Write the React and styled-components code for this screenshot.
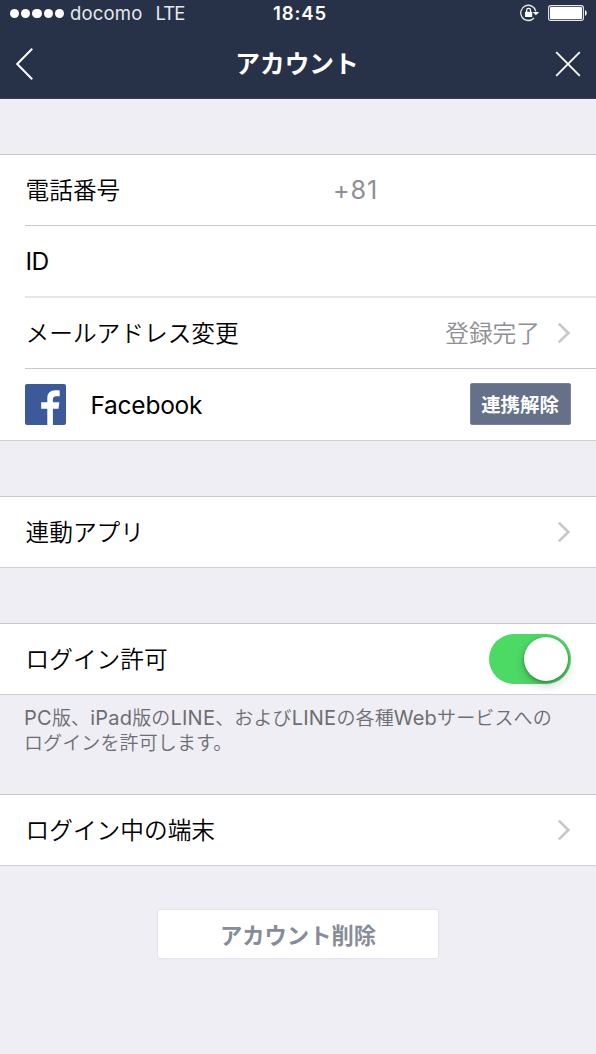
import React from "react";
import styled, { createGlobalStyle, css } from "styled-components";

const GlobalStyle = createGlobalStyle`
  * {
    box-sizing: border-box;
    margin: 0;
    padding: 0;
  }
  body {
    background-color: #efeef4;
    font-family: "Inter", "Noto Sans CJK JP", sans-serif;
    color: #000;
    overflow: hidden;
  }
  svg {
    display: block;
    flex-shrink: 0;
  }
`;

const SScreen = styled.div`
  width: 596px;
  height: 1054px;
  background-color: #efeef4;
`;

const SHeader = styled.header`
  height: 99px;
  background-color: #273148;
  border-bottom: 1px solid #3d4055;
  color: #fff;
`;

const SStatusBar = styled.div`
  display: grid;
  grid-template-columns: 1fr auto 1fr;
  align-items: center;
  height: 27px;
  padding: 0 9px 0 10px;
`;

const SCarrier = styled.div`
  display: flex;
  align-items: center;
  font-size: 18.5px;
  line-height: 26px;
  color: #e6e8ec;
`;

const SSignal = styled.div`
  display: flex;
  gap: 2px;
  margin-right: 6px;
`;

const SDot = styled.i`
  width: 9.2px;
  height: 9.2px;
  border-radius: 50%;
  background-color: #fff;
`;

const SCarrierName = styled.span`
  margin-top: -1px;
  letter-spacing: 0.2px;
  margin-right: 13px;
`;

const SNetwork = styled.span`
  margin-top: -1px;
  letter-spacing: -0.9px;
`;

const STime = styled.span`
  margin-top: -1px;
  padding-left: 3px;
  font-size: 18.5px;
  font-weight: 600;
  line-height: 26px;
  letter-spacing: 0.9px;
`;

const SIndicators = styled.div`
  display: flex;
  align-items: center;
  justify-content: flex-end;
  gap: 8px;
  margin: -1px -1px 0 0;
`;

const SNavBar = styled.div`
  display: grid;
  grid-template-columns: 60px 1fr 60px;
  align-items: center;
  height: 71px;
  padding: 2px 15px 0;
`;

const SNavButton = styled.button`
  display: flex;
  justify-content: ${(props) => (props.$right ? "flex-end" : "flex-start")};
  border: none;
  background: transparent;
  color: #fff;
`;

const STitle = styled.h1`
  font-size: 24.7px;
  font-weight: 600;
  line-height: 36px;
  text-align: center;
  padding-right: 2px;
`;

const SSection = styled.section`
  margin-top: ${(props) => props.$top}px;
  background-color: #fff;
  border-top: 1px solid #c9c8cd;
  border-bottom: 1px solid #cfced3;
`;

const SRow = styled.div`
  display: flex;
  align-items: center;
  height: ${(props) => props.$height || 70}px;
  margin-left: 25px;
  padding-right: 25px;
  ${(props) =>
    props.$line &&
    css`
      border-bottom: 1px solid #c8c7cc;
    `}
  ${(props) =>
    props.$softLine &&
    css`
      border-bottom: 2px solid #e6e6e8;
    `}
`;

const SLabel = styled.span`
  flex: 1;
  padding: 1px 0 0 0.5px;
  font-size: 23.7px;
  font-weight: 350;
  line-height: 34px;
  ${(props) =>
    props.$latin &&
    css`
      padding-top: 0;
      font-size: 24.5px;
      font-weight: 400;
      letter-spacing: ${props.$spacing || 0}px;
    `}
`;

const SValue = styled.span`
  font-size: 23.7px;
  font-weight: 350;
  line-height: 34px;
  padding-top: 1px;
  color: #8e8e93;
  margin-right: 17px;
`;

const SPhone = styled.span`
  width: 238px;
  font-size: 25.2px;
  line-height: 34px;
  letter-spacing: 0.9px;
  color: #8e8e93;
`;

const SFacebook = styled.svg`
  margin-right: 24px;
`;

const SUnlinkButton = styled.button`
  width: 101px;
  height: 42px;
  margin-top: -1px;
  padding: 1px 1px 0 0;
  border: 1px solid #7a8398;
  border-radius: 2px;
  background-color: #657089;
  color: #fff;
  font-family: inherit;
  font-size: 19.4px;
  font-weight: 700;
  line-height: 28px;
`;

const SSwitch = styled.button`
  display: flex;
  justify-content: flex-end;
  width: 82px;
  height: 50px;
  padding: 3px;
  border: none;
  border-radius: 25px;
  background-color: #4cd964;
`;

const SKnob = styled.span`
  width: 44px;
  height: 44px;
  border-radius: 50%;
  background-color: #fff;
  box-shadow: 0 4px 10px rgba(0, 0, 0, 0.22), 0 1px 3px rgba(0, 0, 0, 0.3);
`;

const SNote = styled.p`
  height: 99px;
  padding: 11px 24px 0;
  font-size: 19px;
  font-weight: 350;
  line-height: 25px;
  letter-spacing: 0.12px;
  color: #6d6d72;
  white-space: nowrap;
`;

const SNoteLatin = styled.span`
  font-size: 20px;
  font-weight: 400;
  line-height: 1;
  letter-spacing: 0.24px;
`;

const SDeleteButton = styled.button`
  display: block;
  width: 282px;
  height: 50px;
  margin: 43px auto 0;
  padding-top: 3px;
  border: 1px solid #e4e3ea;
  border-radius: 3px;
  background-color: #fff;
  color: #868d98;
  font-family: inherit;
  font-size: 22.3px;
  font-weight: 600;
  line-height: 32px;
`;

const Chevron = () => (
  <svg width="14" height="22" viewBox="0 0 14 22" fill="none">
    <path d="M1.8 1.6L11.3 11L1.8 20.4" stroke="#c7c7cc" strokeWidth="2.7" />
  </svg>
);

const RotationLock = () => (
  <svg width="20" height="18" viewBox="0 0 20 18" fill="none">
    <path d="M15.8 7.4A7.6 7.6 0 1 0 14 14" stroke="#e6e8ec" strokeWidth="1.3" />
    <path d="M12.6 8H19.2L15.9 11.2Z" fill="#fff" />
    <rect x="5" y="7.8" width="7.2" height="5.2" fill="#fff" />
    <path d="M6.7 8V6.3A1.9 1.9 0 0 1 10.5 6.3V8" stroke="#fff" strokeWidth="1.2" />
  </svg>
);

const Battery = () => (
  <svg width="40" height="16" viewBox="0 0 40 16" fill="none">
    <rect x="0.6" y="0.6" width="34.8" height="14.8" rx="2.2" stroke="#e6e8ec" strokeWidth="1.1" />
    <rect x="2" y="2" width="32" height="12" rx="0.8" fill="#fff" />
    <path d="M37 5.2C39.3 5.6 39.3 10.4 37 10.8Z" fill="#fff" />
  </svg>
);

const FacebookLogo = () => (
  <SFacebook width="41" height="41" viewBox="0 0 41 41">
    <rect width="41" height="41" rx="2" fill="#3c5a99" />
    <path
      d="M22.3 41V24.7H16.2V18.3H22.3V14.2C22.3 9 25.5 6.2 30.3 6.2C32.3 6.2 34 6.3 34.7 6.4V12.3H31.5C28.6 12.3 27.9 13.6 27.9 15.6V18.3H34.4L33.5 24.7H27.9V41Z"
      fill="#fff"
    />
  </SFacebook>
);

const App = () => {
  return (
    <SScreen>
      <GlobalStyle />
      <SHeader>
        <SStatusBar>
          <SCarrier>
            <SSignal>
              {[0, 1, 2, 3, 4].map((dot) => (
                <SDot key={dot} />
              ))}
            </SSignal>
            <SCarrierName>docomo</SCarrierName>
            <SNetwork>LTE</SNetwork>
          </SCarrier>
          <STime>18:45</STime>
          <SIndicators>
            <RotationLock />
            <Battery />
          </SIndicators>
        </SStatusBar>
        <SNavBar>
          <SNavButton aria-label="back">
            <svg width="20" height="32" viewBox="0 0 20 32" fill="none">
              <path d="M17.2 0.8L2.2 16L17.2 31.2" stroke="currentColor" strokeWidth="2" />
            </svg>
          </SNavButton>
          <STitle>アカウント</STitle>
          <SNavButton $right aria-label="close">
            <svg width="26" height="26" viewBox="0 0 26 26" fill="none">
              <path d="M1.2 1.2L24.8 24.8M24.8 1.2L1.2 24.8" stroke="currentColor" strokeWidth="1.8" />
            </svg>
          </SNavButton>
        </SNavBar>
      </SHeader>

      <SSection $top={55}>
        <SRow $height={71} $line>
          <SLabel>電話番号</SLabel>
          <SPhone>+81</SPhone>
        </SRow>
        <SRow $height={72} $softLine>
          <SLabel $latin $spacing={-0.6}>
            ID
          </SLabel>
        </SRow>
        <SRow $height={71} $line>
          <SLabel>メールアドレス変更</SLabel>
          <SValue>登録完了</SValue>
          <Chevron />
        </SRow>
        <SRow $height={71}>
          <FacebookLogo />
          <SLabel $latin $spacing={-0.25}>
            Facebook
          </SLabel>
          <SUnlinkButton>連携解除</SUnlinkButton>
        </SRow>
      </SSection>

      <SSection $top={55}>
        <SRow>
          <SLabel>連動アプリ</SLabel>
          <Chevron />
        </SRow>
      </SSection>

      <SSection $top={55}>
        <SRow>
          <SLabel>ログイン許可</SLabel>
          <SSwitch role="switch" aria-checked="true">
            <SKnob />
          </SSwitch>
        </SRow>
      </SSection>
      <SNote>
        <SNoteLatin>PC</SNoteLatin>版、<SNoteLatin>iPad</SNoteLatin>版の<SNoteLatin>LINE</SNoteLatin>
        、および<SNoteLatin>LINE</SNoteLatin>の各種<SNoteLatin>Web</SNoteLatin>サービスへの
        <br />
        ログインを許可します。
      </SNote>

      <SSection $top={0}>
        <SRow>
          <SLabel>ログイン中の端末</SLabel>
          <Chevron />
        </SRow>
      </SSection>

      <SDeleteButton>アカウント削除</SDeleteButton>
    </SScreen>
  );
};

export default App;
